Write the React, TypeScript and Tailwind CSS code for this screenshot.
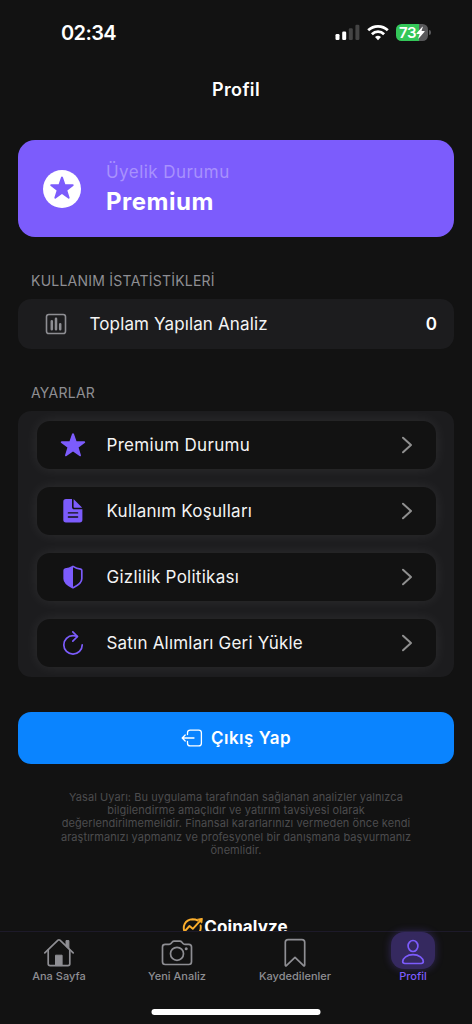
import { ReactNode } from "react";

interface SettingRow {
  label: string;
  tracking: string;
  icon: ReactNode;
}

interface Tab {
  label: string;
  icon: ReactNode;
  active?: boolean;
}

const STAR_PATH =
  "M13 1.2c.5 0 .8.3 1 .8l2.5 7.3h7.7c1.1 0 1.4 1.1.5 1.8l-6.1 4.5 2.3 7.4c.3 1-.5 1.6-1.4 1L13 19.5 6.5 24c-.9.6-1.7 0-1.4-1l2.3-7.4-6.1-4.5c-.9-.7-.6-1.8.5-1.8h7.7L12 2c.2-.5.5-.8 1-.8z";

const SETTINGS: SettingRow[] = [
  {
    label: "Premium Durumu",
    tracking: "tracking-[0.3px]",
    icon: (
      <svg width="26" height="26" viewBox="0 0 26 26" fill="#7c5cfc">
        <path d={STAR_PATH} />
      </svg>
    ),
  },
  {
    label: "Kullanım Koşulları",
    tracking: "tracking-[0.26px]",
    icon: (
      <svg width="26" height="26" viewBox="0 0 26 26" fill="#7c5cfc">
        <path
          fillRule="evenodd"
          d="M6 1h6v8.2c0 1.2.9 2.1 2.1 2.1h8.3v10.5c0 1.8-.9 2.700-2.700 2.700H6c-1.800 0-2.700-.9-2.700-2.700V3.700C3.300 1.900 4.200 1 6 1zM8.400 14.200a.7.7 0 0 0 0 1.400h9.200a.7.7 0 0 0 0-1.400zM8.400 18.300a.7.7 0 0 0 0 1.400h9.200a.7.7 0 0 0 0-1.400z"
        />
        <path d="M13.600 1.300c.3.100.6.300.9.600l7 7c.3.300.5.600.6.900h-7.700c-.5 0-.8-.3-.8-.8z" />
      </svg>
    ),
  },
  {
    label: "Gizlilik Politikası",
    tracking: "tracking-[0.26px]",
    icon: (
      <svg width="26" height="26" viewBox="0 0 26 26">
        <path
          d="M13 2.400c2.600 1.700 5 2.500 7.700 2.800.8.100 1.100.5 1.100 1.200v8.400c0 4.100-3.300 6.300-8.200 8.700-.4.200-.8.200-1.200 0-4.900-2.400-8.200-4.600-8.200-8.700V6.400c0-.7.3-1.100 1.100-1.200C8 4.900 10.400 4.100 13 2.400z"
          fill="none"
          stroke="#7c5cfc"
          strokeWidth="1.7"
        />
        <path
          d="M13 2.400v21.300c-.2 0-.4-.1-.6-.2-4.900-2.400-8.200-4.600-8.200-8.700V6.400c0-.7.3-1.100 1.100-1.200C8 4.900 10.400 4.100 13 2.400z"
          fill="#7c5cfc"
        />
      </svg>
    ),
  },
  {
    label: "Satın Alımları Geri Yükle",
    tracking: "tracking-[0.2px]",
    icon: (
      <svg
        width="26"
        height="26"
        viewBox="0 0 26 26"
        fill="none"
        stroke="#7c5cfc"
        strokeWidth="1.7"
        strokeLinecap="round"
        strokeLinejoin="round"
      >
        <path d="M22.200 14.900A9.200 9.200 0 1 1 13 5.700c1.600 0 3 .2 4.300.8" />
        <path d="M12.800 1.800l4.700 4.700-4.700 4.700" />
      </svg>
    ),
  },
];

const TABS: Tab[] = [
  {
    label: "Ana Sayfa",
    icon: (
      <svg
        width="32"
        height="30"
        viewBox="0 0 32 30"
        fill="none"
        stroke="#8e8e93"
        strokeWidth="1.7"
        strokeLinecap="round"
        strokeLinejoin="round"
      >
        <path d="M1.800 14.800L15 2.200c.6-.5 1.300-.5 1.900 0l13.300 12.600" />
        <path d="M5.200 12v13.700c0 1.200.7 1.900 1.900 1.900h17.800c1.200 0 1.900-.7 1.900-1.900V12" />
        <path d="M23 8V2.600h2.900v8.100z" fill="#8e8e93" strokeWidth="1" />
        <path d="M12.900 17.200h6.200v10.400h-6.200z" fill="#8e8e93" strokeWidth="1" />
      </svg>
    ),
  },
  {
    label: "Yeni Analiz",
    icon: (
      <svg width="32" height="30" viewBox="0 0 32 30" fill="none" stroke="#8e8e93" strokeWidth="1.7" strokeLinejoin="round">
        <path d="M4.200 6.300h4c.8 0 1.300-.2 1.800-.8l1.300-1.500c.5-.6 1-.8 1.800-.8h5.800c.8 0 1.300.2 1.800.8L22 5.500c.5.600 1 .8 1.800.8h4c1.800 0 2.700.9 2.700 2.700v14.800c0 1.800-.9 2.700-2.700 2.700H4.200c-1.800 0-2.700-.9-2.700-2.700V9c0-1.800.9-2.700 2.700-2.700z" />
        <circle cx="16" cy="15.8" r="6.5" />
        <circle cx="25.2" cy="10.8" r="1.5" fill="#8e8e93" stroke="none" />
      </svg>
    ),
  },
  {
    label: "Kaydedilenler",
    icon: (
      <svg width="32" height="30" viewBox="0 0 32 30" fill="none" stroke="#8e8e93" strokeWidth="1.7" strokeLinejoin="round">
        <path d="M6.300 4.300c0-1.800.9-2.700 2.700-2.700h14c1.800 0 2.700.9 2.700 2.700v22.800c0 .9-.6 1-1.100.5L16 19.300l-8.600 8.300c-.5.500-1.100.4-1.100-.5z" />
      </svg>
    ),
  },
  {
    label: "Profil",
    active: true,
    icon: (
      <svg width="32" height="30" viewBox="0 0 32 30" fill="none" stroke="#7c5cfc" strokeWidth="1.7">
        <ellipse cx="16" cy="9" rx="4.9" ry="5.5" />
        <path d="M16 17.600c6 0 10.300 3.600 10.300 7 0 1.200-.7 1.900-2.200 1.900H7.900c-1.500 0-2.200-.7-2.200-1.900 0-3.400 4.300-7 10.300-7z" />
      </svg>
    ),
  },
];

function StatusBar() {
  return (
    <div className="flex h-[65px] shrink-0 items-center justify-between pr-[41px] pl-[61px]">
      <span className="text-[20px] leading-6 font-semibold tracking-[-0.6px]">02:34</span>
      <div className="flex items-center gap-[7px]">
        <svg width="25" height="17" viewBox="0 0 25 17">
          <rect x="0.5" y="10" width="4" height="6" rx="1.2" fill="#fff" />
          <rect x="7.2" y="7.5" width="4" height="8.5" rx="1.2" fill="#fff" />
          <rect x="13.8" y="4.3" width="4" height="11.7" rx="1.2" fill="#444" />
          <rect x="20.4" y="0.8" width="4" height="15.2" rx="1.2" fill="#444" />
        </svg>
        <svg width="22" height="17" viewBox="0 0 22 17" fill="none" stroke="#fff" strokeWidth="2.7">
          <path d="M1.200 6.300a14 14 0 0 1 19.600 0" />
          <path d="M4.900 10.200a8.700 8.700 0 0 1 12.200 0" />
          <path d="M11 16.200l-3-3.100a4.300 4.300 0 0 1 6 0z" fill="#fff" stroke="none" />
        </svg>
        <div className="flex items-center gap-px">
          <div className="flex h-[17px] w-8 items-center rounded-[5.5px] bg-[linear-gradient(90deg,#34c759_73%,#58585a_73%)] pl-[3px]">
            <span className="text-[15px] leading-4 font-semibold tracking-[-0.4px]">73</span>
            <svg width="9" height="13" viewBox="0 0 9 13" fill="#fff">
              <path d="M6.300.8L.6 7.200c-.3.400-.1.700.3.700h2.700L2.300 12c-.1.500.3.600.6.300l5.600-6.500c.3-.4.100-.7-.3-.7H5.500l1.300-4c.1-.5-.2-.6-.5-.3z" />
            </svg>
          </div>
          <div className="h-[5px] w-[2px] rounded-r-full bg-[#58585a]" />
        </div>
      </div>
    </div>
  );
}

function SettingItem({ label, icon, tracking }: SettingRow) {
  return (
    <div className="flex h-12 items-center rounded-[13px] bg-[#121212] pr-[23px] pl-[23.5px] shadow-[0_0_14px_rgba(255,255,255,0.08)]">
      {icon}
      <span className={`ml-[20.5px] flex-1 text-[17px] leading-6 text-[#f4f4f4] ${tracking}`}>{label}</span>
      <svg width="12" height="18" viewBox="0 0 12 18" fill="none" stroke="#8f8f8f" strokeWidth="2" strokeLinecap="round" strokeLinejoin="round">
        <path d="M2 1.700L10 9l-8 7.300" />
      </svg>
    </div>
  );
}

function TabBar() {
  return (
    <nav className="relative h-[93px] shrink-0 border-t-[1.5px] border-[#1d1a29] bg-[#121212]">
      <div className="grid grid-cols-4">
        {TABS.map(tab => (
          <div key={tab.label} className="flex flex-col items-center">
            <div
              className={
                tab.active
                  ? "flex h-[37px] w-11 items-center justify-center rounded-[13px] bg-[#35295f] pt-[3px] shadow-[0_0_9px_rgba(124,92,252,0.3)]"
                  : "flex h-[37px] w-11 items-center justify-center pt-[5px]"
              }
            >
              {tab.icon}
            </div>
            <span className={`text-[11px] leading-[14px] font-medium tracking-[0.02px] ${tab.active ? "text-[#7c5cfc]" : "text-[#8e8e93]"}`}>
              {tab.label}
            </span>
          </div>
        ))}
      </div>
      {/* Home indicator */}
      <div className="absolute bottom-[9px] left-1/2 h-[6px] w-[169px] -translate-x-1/2 rounded-full bg-white" />
    </nav>
  );
}

export default function App() {
  return (
    <div className="flex h-screen w-full flex-col overflow-hidden bg-[#121212] font-['Inter',sans-serif] text-white">
      <StatusBar />
      <main className="min-h-0 flex-1 overflow-hidden px-[18px]">
        <h1 className="pt-[13px] text-center text-[18px] leading-6 font-semibold tracking-[0.35px]">Profil</h1>

        {/* Membership card */}
        <section className="mt-[38px] flex h-[97px] items-center rounded-[17px] bg-[#7c5cfc] pl-[25px]">
          <svg width="38" height="38" viewBox="0 0 38 38">
            <circle cx="19" cy="19" r="19" fill="#fff" />
            <path d={STAR_PATH} transform="translate(6.5 5.4) scale(0.96)" fill="#7c5cfc" />
          </svg>
          <div className="ml-[25px]">
            <p className="text-[17px] leading-6 tracking-[0.45px] text-[#a891fd]">Üyelik Durumu</p>
            <p className="mt-[3px] text-[24px] leading-[30px] font-bold tracking-[0.5px]">Premium</p>
          </div>
        </section>

        <h2 className="mt-[34px] pl-[13px] text-[14px] leading-5 tracking-[0.24px] text-[#8e8e93]">KULLANIM İSTATİSTİKLERİ</h2>
        <section className="mt-2 flex h-[50px] items-center rounded-[13px] bg-[#1c1c1e] pr-[17px] pl-[27px]">
          <svg width="22" height="22" viewBox="0 0 22 22" fill="none" stroke="#8e8e93" strokeWidth="1.6">
            <rect x="1.5" y="1.5" width="19" height="19" rx="2.3" />
            <path d="M6.800 8.200v8M11 5.800v10.400M15.200 11.200v5" strokeWidth="2.5" strokeLinecap="round" />
          </svg>
          <span className="ml-[22.5px] flex-1 text-[17px] leading-6 tracking-[0.13px] text-[#f4f4f4]">Toplam Yapılan Analiz</span>
          <span className="text-[17px] leading-6 font-semibold">0</span>
        </section>

        <h2 className="mt-[34px] pl-[13px] text-[14px] leading-5 tracking-[0.24px] text-[#8e8e93]">AYARLAR</h2>
        <section className="mt-2 flex flex-col gap-[18px] overflow-hidden rounded-[13px] bg-[#1c1c1e] px-[18.5px] py-[10px]">
          {SETTINGS.map(row => (
            <SettingItem key={row.label} {...row} />
          ))}
        </section>

        <button className="mt-[35px] flex h-[52px] w-full items-center justify-center gap-2 rounded-[13px] bg-[#0a84ff]">
          <svg width="22" height="18" viewBox="0 0 22 18" fill="none" stroke="#fff" strokeWidth="1.3" strokeLinecap="round" strokeLinejoin="round">
            <path d="M6.500 5.500V3.800c0-1.800.9-2.700 2.700-2.700h8.500c1.800 0 2.700.9 2.700 2.700v10.400c0 1.800-.9 2.700-2.700 2.700H9.200c-1.800 0-2.700-.9-2.700-2.700v-1.700" />
            <path d="M13 9H1.300M4.200 6L1.200 9l3 3" />
          </svg>
          <span className="text-[17px] leading-6 font-semibold tracking-[0.5px]">Çıkış Yap</span>
        </button>

        <p className="mt-[27px] text-center text-[11px] leading-[13.2px] tracking-[0.07px] text-[#4c4c4e]">
          Yasal Uyarı: Bu uygulama tarafından sağlanan analizler yalnızca
          <br />
          bilgilendirme amaçlıdır ve yatırım tavsiyesi olarak
          <br />
          değerlendirilmemelidir. Finansal kararlarınızı vermeden önce kendi
          <br />
          araştırmanızı yapmanız ve profesyonel bir danışmana başvurmanız
          <br />
          önemlidir.
        </p>

        <div className="mt-[60px] flex items-start justify-center pr-[2px]">
          <svg width="22" height="20" viewBox="0 0 22 20" fill="none" stroke="#fbae2c" strokeWidth="1.9" strokeLinecap="round" strokeLinejoin="round">
            <path d="M3.500 16.500C-.5 10 3 2.500 10.500 2.200c2 0 3.700.4 5 1.200M18.600 8.500c.6 3.500-.3 6-2.200 8" />
            <path d="M3.500 13.500l4-4.500 3.300 2.800 8-8.600" />
            <path d="M16 2.200l4.300-.8-.5 4.300z" fill="#fbae2c" strokeWidth="1" />
          </svg>
          <span className="text-[17px] leading-5 font-bold tracking-[0.1px]">Coinalyze</span>
        </div>
      </main>
      <TabBar />
    </div>
  );
}
